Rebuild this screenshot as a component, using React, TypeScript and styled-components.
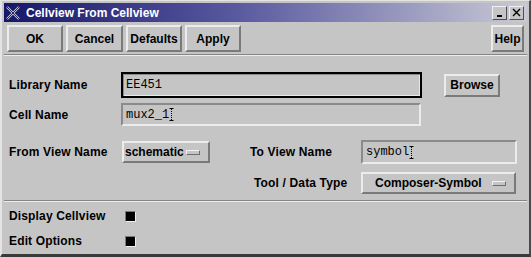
import React from 'react';
import styled, { createGlobalStyle } from 'styled-components';

const GlobalStyle = createGlobalStyle`
  html, body {
    margin: 0;
    padding: 0;
    background: #c5c5c5;
  }
  body {
    font-family: "Liberation Sans", Arial, sans-serif;
    font-size: 12px;
    color: #000;
  }
`;

const Window = styled.div`
  width: 531px;
  height: 257px;
  box-sizing: border-box;
  background: #c5c5c5;
  border-style: solid;
  border-width: 1px 2px 3px 2px;
  border-color: #e4e4e4 #4a4a4a #3a3a3a #e4e4e4;
  padding: 2px 2px 0 2px;
  display: flex;
  flex-direction: column;
`;

const TitleBar = styled.div`
  height: 19px;
  flex-shrink: 0;
  display: flex;
  align-items: center;
  background: linear-gradient(to right, #17176a 0%, #5a5aa0 45%, #c9c9d6 100%);
  padding: 0 3px 0 1px;
`;

const TitleIcon = styled.svg`
  width: 16px;
  height: 16px;
  flex-shrink: 0;
`;

const TitleText = styled.span`
  margin-left: 5px;
  color: #fff;
  font-weight: bold;
  font-size: 12px;
  flex: 1;
`;

const TitleButton = styled.div`
  width: 13px;
  height: 12px;
  margin-left: 2px;
  background: #c5c5c5;
  border-style: solid;
  border-width: 1px;
  border-color: #f0f0f0 #505050 #505050 #f0f0f0;
  display: flex;
  align-items: center;
  justify-content: center;
`;

const ButtonBar = styled.div`
  height: 27px;
  padding: 3px 3px 2px 3px;
  display: flex;
  gap: 3px;
  flex-shrink: 0;
`;

const Spacer = styled.div`
  flex: 1;
`;

const BevelButton = styled.div<{ $w: number; $h?: number; $ml?: number }>`
  width: ${p => p.$w}px;
  height: ${p => p.$h ?? 27}px;
  margin-left: ${p => p.$ml ?? 0}px;
  box-sizing: border-box;
  background: #c5c5c5;
  border-style: solid;
  border-width: 2px;
  border-color: #ececec #7a7a7a #7a7a7a #ececec;
  display: flex;
  align-items: center;
  justify-content: center;
  font-weight: bold;
  font-size: 12px;
  white-space: nowrap;
  flex-shrink: 0;
`;

const Separator = styled.div`
  height: 0;
  border-top: 1px solid #858585;
  border-bottom: 1px solid #ededed;
  flex-shrink: 0;
`;

const Form = styled.div`
  padding: 16px 0 6px 5px;
  display: flex;
  flex-direction: column;
  flex-shrink: 0;
`;

const Row = styled.div<{ $h: number; $mt?: number }>`
  height: ${p => p.$h}px;
  margin-top: ${p => p.$mt ?? 0}px;
  display: flex;
  align-items: center;
`;

const Label = styled.span<{ $w: number; $pl?: number }>`
  width: ${p => p.$w}px;
  padding-left: ${p => p.$pl ?? 0}px;
  box-sizing: border-box;
  font-weight: bold;
  font-size: 12px;
  letter-spacing: 0.15px;
  white-space: nowrap;
  flex-shrink: 0;
`;

const TextField = styled.div<{ $w: number; $h: number; $focused?: boolean }>`
  width: ${p => p.$w}px;
  height: ${p => p.$h}px;
  box-sizing: border-box;
  background: #c5c5c5;
  border: 2px solid;
  border-color: ${p => (p.$focused ? '#000' : '#8a8a8a #ebebeb #ebebeb #8a8a8a')};
  box-shadow: ${p => (p.$focused ? 'inset 1px 1px 0 #8a8a8a, inset -1px -1px 0 #e8e8e8' : 'none')};
  padding-left: 3px;
  display: flex;
  align-items: center;
  font-family: "Liberation Mono", "Courier New", monospace;
  font-size: 12px;
  flex-shrink: 0;
`;

const Caret = styled.span`
  position: relative;
  display: inline-block;
  width: 5px;
  height: 13px;
  &::before {
    content: '';
    position: absolute;
    left: 2px;
    top: 1px;
    bottom: 1px;
    border-left: 1px dotted #000;
  }
  &::after {
    content: '';
    position: absolute;
    left: 0;
    right: 0;
    top: 0;
    bottom: 0;
    border-top: 1px solid #000;
    border-bottom: 1px solid #000;
    transform: scaleX(0.8);
  }
`;

const OptionButton = styled.div<{ $w: number; $pl: number }>`
  width: ${p => p.$w}px;
  height: 22px;
  box-sizing: border-box;
  background: #c5c5c5;
  border-style: solid;
  border-width: 2px;
  border-color: #ececec #7a7a7a #7a7a7a #ececec;
  padding: 0 8px 0 ${p => p.$pl}px;
  display: flex;
  align-items: center;
  font-weight: bold;
  font-size: 12px;
  flex-shrink: 0;
`;

const OptionText = styled.span`
  flex: 1;
  white-space: nowrap;
`;

const OptionIndicator = styled.span`
  width: 14px;
  height: 5px;
  box-sizing: border-box;
  background: #c5c5c5;
  border-style: solid;
  border-width: 1px;
  border-color: #f2f2f2 #6e6e6e #6e6e6e #f2f2f2;
`;

const Options = styled.div`
  padding: 4px 0 0 5px;
  display: flex;
  flex-direction: column;
  gap: 5px;
`;

const CheckBox = styled.span<{ $on: boolean }>`
  width: 11px;
  height: 11px;
  box-sizing: border-box;
  background: ${p => (p.$on ? '#000' : '#c5c5c5')};
  border-style: solid;
  border-width: 1px;
  border-color: #7a7a7a #eeeeee #eeeeee #7a7a7a;
`;

const XLogo = () => (
  <TitleIcon viewBox="0 0 16 16">
    <path d="M2 2 L14 14 M14 2 L2 14" stroke="#c8c8d8" strokeWidth="2.4" />
    <path d="M2 2 L14 14 M14 2 L2 14" stroke="#101040" strokeWidth="0.9" />
  </TitleIcon>
);

const App: React.FC = () => {
  return (
    <>
      <GlobalStyle />
      <Window>
        <TitleBar>
          <XLogo />
          <TitleText>Cellview From Cellview</TitleText>
          <TitleButton>
            <svg width="9" height="9" viewBox="0 0 9 9">
              <rect x="2" y="7" width="5" height="2" fill="#000" />
            </svg>
          </TitleButton>
          <TitleButton>
            <svg width="9" height="9" viewBox="0 0 9 9">
              <path d="M1 1 L8 8 M8 1 L1 8" stroke="#000" strokeWidth="1.4" />
            </svg>
          </TitleButton>
        </TitleBar>

        <ButtonBar>
          <BevelButton $w={56}>OK</BevelButton>
          <BevelButton $w={57}>Cancel</BevelButton>
          <BevelButton $w={56}>Defaults</BevelButton>
          <BevelButton $w={56}>Apply</BevelButton>
          <Spacer />
          <BevelButton $w={33}>Help</BevelButton>
        </ButtonBar>

        <Separator />

        <Form>
          <Row $h={26}>
            <Label $w={112}>Library Name</Label>
            <TextField $w={301} $h={26} $focused>EE451</TextField>
            <BevelButton $w={56} $h={23} $ml={22}>Browse</BevelButton>
          </Row>
          <Row $h={23} $mt={5}>
            <Label $w={112}>Cell Name</Label>
            <TextField $w={300} $h={23}>
              mux2_1<Caret />
            </TextField>
          </Row>
          <Row $h={24} $mt={14}>
            <Label $w={113}>From View Name</Label>
            <OptionButton $w={88} $pl={1}>
              <OptionText>schematic</OptionText>
              <OptionIndicator />
            </OptionButton>
            <Label $w={151} $pl={40}>To View Name</Label>
            <TextField $w={156} $h={24}>
              symbol<Caret />
            </TextField>
          </Row>
          <Row $h={22} $mt={8}>
            <Label $w={352} $pl={245}>Tool / Data Type</Label>
            <OptionButton $w={155} $pl={12}>
              <OptionText>Composer-Symbol</OptionText>
              <OptionIndicator />
            </OptionButton>
          </Row>
        </Form>

        <Separator />

        <Options>
          <Row $h={20}>
            <Label $w={116}>Display Cellview</Label>
            <CheckBox $on />
          </Row>
          <Row $h={20}>
            <Label $w={116}>Edit Options</Label>
            <CheckBox $on />
          </Row>
        </Options>
      </Window>
    </>
  );
};

export default App;
